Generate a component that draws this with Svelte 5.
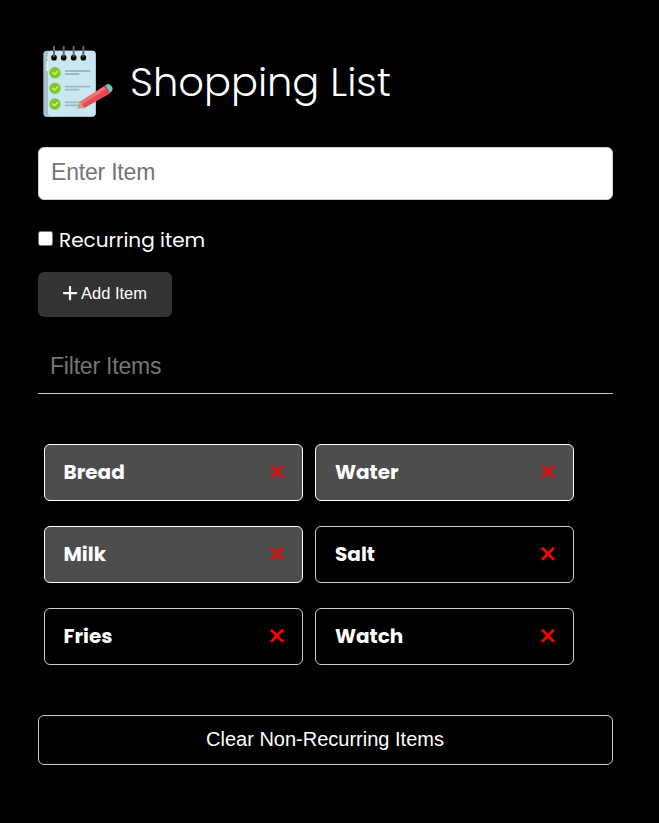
<script>
  let newItem = $state('');
  let filter = $state('');
  let recurring = $state(false);
  let items = $state([
    { name: 'Bread', recurring: true },
    { name: 'Water', recurring: true },
    { name: 'Milk', recurring: true },
    { name: 'Salt', recurring: false },
    { name: 'Fries', recurring: false },
    { name: 'Watch', recurring: false }
  ]);
  const visible = $derived(items.filter((item) => item.name.toLowerCase().includes(filter.toLowerCase())));

  function addItem(event) {
    event.preventDefault();
    if (newItem.trim()) items.push({ name: newItem.trim(), recurring });
    newItem = '';
  }

  function removeItem(item) {
    items = items.filter((other) => other !== item);
  }

  function clearItems() {
    items = items.filter((item) => item.recurring);
  }
</script>

<main>
  <header>
    <svg class="logo" viewBox="24 27 225 225" aria-hidden="true">
      <rect x="40" y="47" width="157" height="199" rx="11" fill="#a4c3cc" />
      <path d="M64 47H187Q197 47 197 57V235Q197 243 188 243H64Q54 243 54 233V57Q54 47 64 47Z" fill="#cae7ef" />
      <path d="M52 68v1M52 80v26" stroke="#e9f7fb" stroke-width="5" stroke-linecap="round" />
      {#each [72, 101, 131, 160] as x}
        <circle cx={x} cy="68" r="8.5" fill="#000" />
        <path d="M{x} 33V65" stroke="#626579" stroke-width="6" />
      {/each}
      {#each [113, 160, 207] as y}
        <circle cx="75" cy={y} r="17" fill="#7fc52f" />
        <path d="M68 {y}l6 5 9-9" fill="none" stroke="#d2f04a" stroke-width="5" stroke-linecap="round" stroke-linejoin="round" />
        <path d="M105 {y - 5}h76M105 {y + 4}h43" stroke="#9bbbc3" stroke-width="5.5" />
      {/each}
      <path d="M149 201L225 152L241 175L163 219Z" fill="#e94858" />
      <path d="M149 201L225 152L231 160L155 210Z" fill="#ff6c78" />
      <path d="M149 200L164 219L141 221Z" fill="#c99b88" />
      <path d="M225 152L231 148Q240 145 246 155Q251 163 243 172L239 174Z" fill="#5fd0b8" />
      <path d="M221 154L227 151L240 173L234 177Z" fill="#dc4256" />
    </svg>
    <h1>Shopping List</h1>
  </header>

  <form onsubmit={addItem}>
    <input class="item-input" type="text" placeholder="Enter Item" bind:value={newItem} />
    <label class="recurring">
      <input type="checkbox" bind:checked={recurring} />
      <span>Recurring item</span>
    </label>
    <button class="add" type="submit">
      <svg viewBox="0 0 15 15" aria-hidden="true"><path d="M7 .9v12.4M.9 7.1h12.4" stroke="currentColor" stroke-width="2.2" stroke-linecap="round" /></svg>
      <span>Add Item</span>
    </button>
  </form>

  <input class="filter" type="text" placeholder="Filter Items" bind:value={filter} />

  <ul>
    {#each visible as item}
      <li class:marked={item.recurring}>
        <span>{item.name}</span>
        <button class="remove" aria-label="Remove {item.name}" onclick={() => removeItem(item)}>
          <svg viewBox="0 0 14 14"><path d="M1.8 1.6l10.4 10.4M12.2 1.6L1.8 12" stroke="currentColor" stroke-width="2.8" stroke-linecap="round" /></svg>
        </button>
      </li>
    {/each}
  </ul>

  <button class="clear" onclick={clearItems}>Clear Non-Recurring Items</button>
</main>

<style>
  :global(body) {
    margin: 0;
    background: #000;
  }
  main {
    box-sizing: border-box;
    min-height: 823px;
    padding: 44px 46px 58px 38px;
    color: #fff;
    font-family: Poppins, Inter, sans-serif;
  }
  *, *::before {
    box-sizing: border-box;
  }
  input, button {
    font-family: Arial, "Liberation Sans", sans-serif;
    margin: 0;
  }
  header {
    display: flex;
    align-items: center;
    height: 75px;
  }
  .logo {
    width: 75px;
    height: 75px;
  }
  h1 {
    margin: 0 0 0 17px;
    font-size: 40px;
    font-weight: 300;
    line-height: 60px;
    white-space: nowrap;
  }
  form {
    display: flex;
    flex-direction: column;
    align-items: flex-start;
    margin-top: 28px;
  }
  .item-input {
    width: 100%;
    height: 53px;
    padding: 0 12px 3px;
    border: 1px solid #ccc;
    border-radius: 6px;
    background: #fff;
    font-size: 23px;
    letter-spacing: -0.2px;
  }
  input::placeholder {
    color: #757575;
    opacity: 1;
  }
  .recurring {
    display: flex;
    align-items: center;
    height: 30px;
    margin-top: 25px;
    font-size: 20px;
    line-height: 30px;
  }
  .recurring input {
    appearance: none;
    width: 15px;
    height: 15px;
    margin: 0 6px 3px 0;
    border: 1px solid #767676;
    border-radius: 2.5px;
    background: #fff;
  }
  .recurring input:checked {
    background: #0075ff;
  }
  .add {
    display: flex;
    align-items: center;
    justify-content: center;
    gap: 3px;
    width: 134px;
    height: 45px;
    margin-top: 17px;
    padding: 0 0 3px;
    border: 0;
    border-radius: 6px;
    background: #333;
    color: #fff;
    font-size: 16.5px;
  }
  .add svg {
    width: 15px;
    height: 15px;
  }
  .filter {
    display: block;
    width: 100%;
    height: 53px;
    margin-top: 24px;
    padding: 0 12px 2px;
    border: 0;
    border-bottom: 1px solid #ccc;
    background: transparent;
    color: #fff;
    font-size: 23px;
    letter-spacing: -0.2px;
  }
  ul {
    display: grid;
    grid-template-columns: 259px 259px;
    gap: 25px 12px;
    margin: 50px 0 50px 6px;
    padding: 0;
    list-style: none;
  }
  li {
    display: flex;
    align-items: center;
    justify-content: space-between;
    height: 57px;
    padding: 0 18px 2px 18.5px;
    border: 1px solid #ccc;
    border-radius: 6px;
    font-size: 20px;
    font-weight: 700;
    line-height: 30px;
  }
  li:nth-child(even) {
    padding-left: 19px;
  }
  .marked {
    border-color: #fff;
    background: #4d4d4d;
  }
  .remove {
    display: flex;
    padding: 0;
    border: 0;
    background: none;
    color: #f00;
  }
  .remove svg {
    width: 14px;
    height: 14px;
  }
  .marked .remove path {
    stroke-width: 2.4;
  }
  .clear {
    width: 100%;
    height: 50px;
    padding: 0 1px 2px 0;
    border: 1px solid #ccc;
    border-radius: 6px;
    background: #000;
    color: #fff;
    font-size: 20px;
  }
</style>
